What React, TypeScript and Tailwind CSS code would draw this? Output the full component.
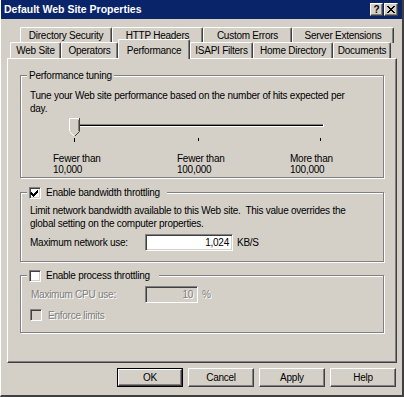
import React from "react";

const raised =
  "border border-t-white border-l-white border-r-[#404040] border-b-[#404040] shadow-[inset_-1px_-1px_0_#808080]";
const sunken =
  "border border-t-[#808080] border-l-[#808080] border-r-white border-b-white shadow-[inset_1px_1px_0_#404040,inset_-1px_-1px_0_#d4d0c8]";
const etched = "relative border border-[#808080] shadow-[inset_1px_1px_0_#ffffff,1px_1px_0_#ffffff]";

function Check({ checked, disabled }: { checked?: boolean; disabled?: boolean }) {
  return (
    <div
      className={`w-[12px] h-[12px] shrink-0 relative ${sunken} ${disabled ? "bg-[#d4d0c8]" : "bg-white"}`}
    >
      {checked && (
        <svg width="10" height="10" viewBox="0 0 10 10" className="absolute left-0 top-0" shapeRendering="crispEdges">
          <path d="M1 4h1v1h1v1h1v-1h1v-1h1v-1h1v-1h1v3h-1v1h-1v1h-1v1h-1v1h-1v-1h-1v-1h-1v-1h-1z" fill="#000" />
        </svg>
      )}
    </div>
  );
}

function BackTab({ label, w }: { label: string; w: string }) {
  return (
    <div
      className={`${w} h-[16px] flex items-center justify-center border-t border-l border-white border-r border-r-[#404040] shadow-[inset_-1px_0_0_#808080] rounded-tl-[2px] rounded-tr-[2px]`}
    >
      {label}
    </div>
  );
}

export default function App() {
  return (
    <div
      className="w-[404px] h-[397px] bg-[#d4d0c8] border-l border-l-white border-r-2 border-r-[#404040] border-b-2 border-b-[#404040] flex flex-col text-[10px] tracking-[-0.25px] text-black overflow-hidden"
      style={{ fontFamily: '"Liberation Sans", Arial, sans-serif' }}
    >
      {/* Title bar */}
      <div className="h-[19px] bg-[#0a246a] flex items-center pl-[3px] pr-[4px] shrink-0">
        <span className="text-white font-bold text-[10.5px] tracking-normal leading-none">Default Web Site Properties</span>
        <div className="ml-auto flex items-center">
          <div className={`w-[13px] h-[13px] bg-[#d4d0c8] ${raised} flex items-center justify-center font-bold text-[10px] leading-none`}>
            ?
          </div>
          <div className={`ml-[1px] w-[14px] h-[13px] bg-[#d4d0c8] ${raised} flex items-center justify-center`}>
            <svg width="8" height="7" viewBox="0 0 8 7" shapeRendering="crispEdges">
              <path d="M0 0h2v1h1v1h2v-1h1v-1h2v1h-1v1h-1v1h-1v1h1v1h1v1h1v1h-2v-1h-1v-1h-2v1h-1v1h-2v-1h1v-1h1v-1h1v-1h-1v-1h-1v-1h-1z" fill="#000" />
            </svg>
          </div>
        </div>
      </div>

      {/* Tabs */}
      <div className="pt-[8px] flex pl-[19px]">
        <BackTab label="Directory Security" w="w-[92px]" />
        <BackTab label="HTTP Headers" w="w-[91px]" />
        <BackTab label="Custom Errors" w="w-[89px]" />
        <BackTab label="Server Extensions" w="w-[102px]" />
      </div>
      <div className="-mt-[4px] h-[19px] flex items-end pl-[9px] relative z-10">
        <BackTab label="Web Site" w="w-[51px]" />
        <BackTab label="Operators" w="w-[57px]" />
        <div className="w-[72px] h-[20px] -mb-[1px] bg-[#d4d0c8] flex items-start pt-[3px] justify-center border-t border-l border-white border-r border-r-[#404040] shadow-[inset_-1px_0_0_#808080] rounded-tl-[2px] rounded-tr-[2px]">
          Performance
        </div>
        <BackTab label="ISAPI Filters" w="w-[63px]" />
        <BackTab label="Home Directory" w="w-[80px]" />
        <BackTab label="Documents" w="w-[58px]" />
      </div>

      {/* Panel */}
      <div className="ml-[6px] w-[390px] h-[305px] shrink-0 border border-t-white border-l-white border-r-[#404040] border-b-[#404040] shadow-[inset_-1px_-1px_0_#808080] px-[12px] pt-[16px]">
        {/* Performance tuning */}
        <div className={`${etched} h-[103px] w-[364px]`}>
          <div className="absolute left-[6px] -top-[7px] bg-[#d4d0c8] px-[2px] leading-[13px]">Performance tuning</div>
          <div className="pt-[13px] pl-[9px] leading-[13px]">
            Tune your Web site performance based on the number of hits expected per
            <br />
            day.
          </div>
          <svg width="362" height="30" viewBox="0 0 362 30" shapeRendering="crispEdges" className="block">
            <rect x="54" y="9" width="249" height="1" fill="#808080" />
            <rect x="54" y="10" width="249" height="1" fill="#000000" />
            <rect x="54" y="11" width="249" height="1" fill="#ffffff" />
            <rect x="302" y="9" width="1" height="3" fill="#ffffff" />
            <rect x="53" y="23" width="1" height="4" fill="#000" />
            <rect x="177" y="23" width="1" height="3" fill="#000" />
            <rect x="299" y="23" width="1" height="3" fill="#000" />
            <polygon points="48,3 59,3 59,16 54,21 53,21 48,16" fill="#d4d0c8" />
            <path d="M48.5 16V3.5H58" stroke="#ffffff" fill="none" />
            <path d="M58.5 3V16.5L54 21" stroke="#404040" fill="none" shapeRendering="auto" />
            <path d="M57.5 4.5V16" stroke="#808080" fill="none" />
            <path d="M48.5 16.5L53 21" stroke="#ffffff" fill="none" shapeRendering="auto" />
          </svg>
          <div className="mt-[8px] pl-[32px] flex leading-[11px]">
            <div className="w-[124px]">
              Fewer than
              <br />
              10,000
            </div>
            <div className="w-[113px]">
              Fewer than
              <br />
              100,000
            </div>
            <div>
              More than
              <br />
              100,000
            </div>
          </div>
        </div>

        {/* Bandwidth throttling */}
        <div className={`${etched} mt-[14px] h-[70px] w-[364px]`}>
          <div className="absolute left-[6px] -top-[7px] bg-[#d4d0c8] pl-[2px] pr-[7px] h-[13px] flex items-center gap-[5px]">
            <Check checked />
            <span className="leading-[13px]">Enable bandwidth throttling</span>
          </div>
          <div className="pt-[11px] pl-[9px] leading-[13px]">
            Limit network bandwidth available to this Web site.&nbsp; This value overrides the
            <br />
            global setting on the computer properties.
          </div>
          <div className="mt-[4px] pl-[9px] flex items-center h-[17px]">
            <div className="w-[115px]">Maximum network use:</div>
            <div className={`w-[88px] h-[17px] bg-white ${sunken} flex items-center justify-end pr-[3px]`}>1,024</div>
            <div className="ml-[4px]">KB/S</div>
          </div>
        </div>

        {/* Process throttling */}
        <div className={`${etched} mt-[13px] h-[58px] w-[364px]`}>
          <div className="absolute left-[6px] -top-[7px] bg-[#d4d0c8] pl-[2px] pr-[9px] h-[13px] flex items-center gap-[5px]">
            <Check />
            <span className="leading-[13px]">Enable process throttling</span>
          </div>
          <div className="pt-[10px] pl-[10px] flex items-center h-[27px] text-[#808080] [text-shadow:1px_1px_0_#ffffff]">
            <div className="w-[114px]">Maximum CPU use:</div>
            <div className={`w-[53px] h-[17px] bg-[#d4d0c8] ${sunken} flex items-center justify-end pr-[4px]`}>10</div>
            <div className="ml-[4px]">%</div>
          </div>
          <div className="mt-[6px] pl-[9px] flex items-center h-[12px] gap-[6px] text-[#808080] [text-shadow:1px_1px_0_#ffffff]">
            <Check disabled />
            <span>Enforce limits</span>
          </div>
        </div>
      </div>

      {/* Buttons */}
      <div className="mt-[5px] flex justify-end pr-[6px] gap-[5px]">
        <div className="w-[66px] h-[19px] border border-black">
          <div className={`w-full h-full ${raised} flex items-center justify-center`}>OK</div>
        </div>
        <div className={`w-[66px] h-[19px] ${raised} flex items-center justify-center`}>Cancel</div>
        <div className={`w-[66px] h-[19px] ${raised} flex items-center justify-center`}>Apply</div>
        <div className={`w-[66px] h-[19px] ${raised} flex items-center justify-center`}>Help</div>
      </div>
    </div>
  );
}
